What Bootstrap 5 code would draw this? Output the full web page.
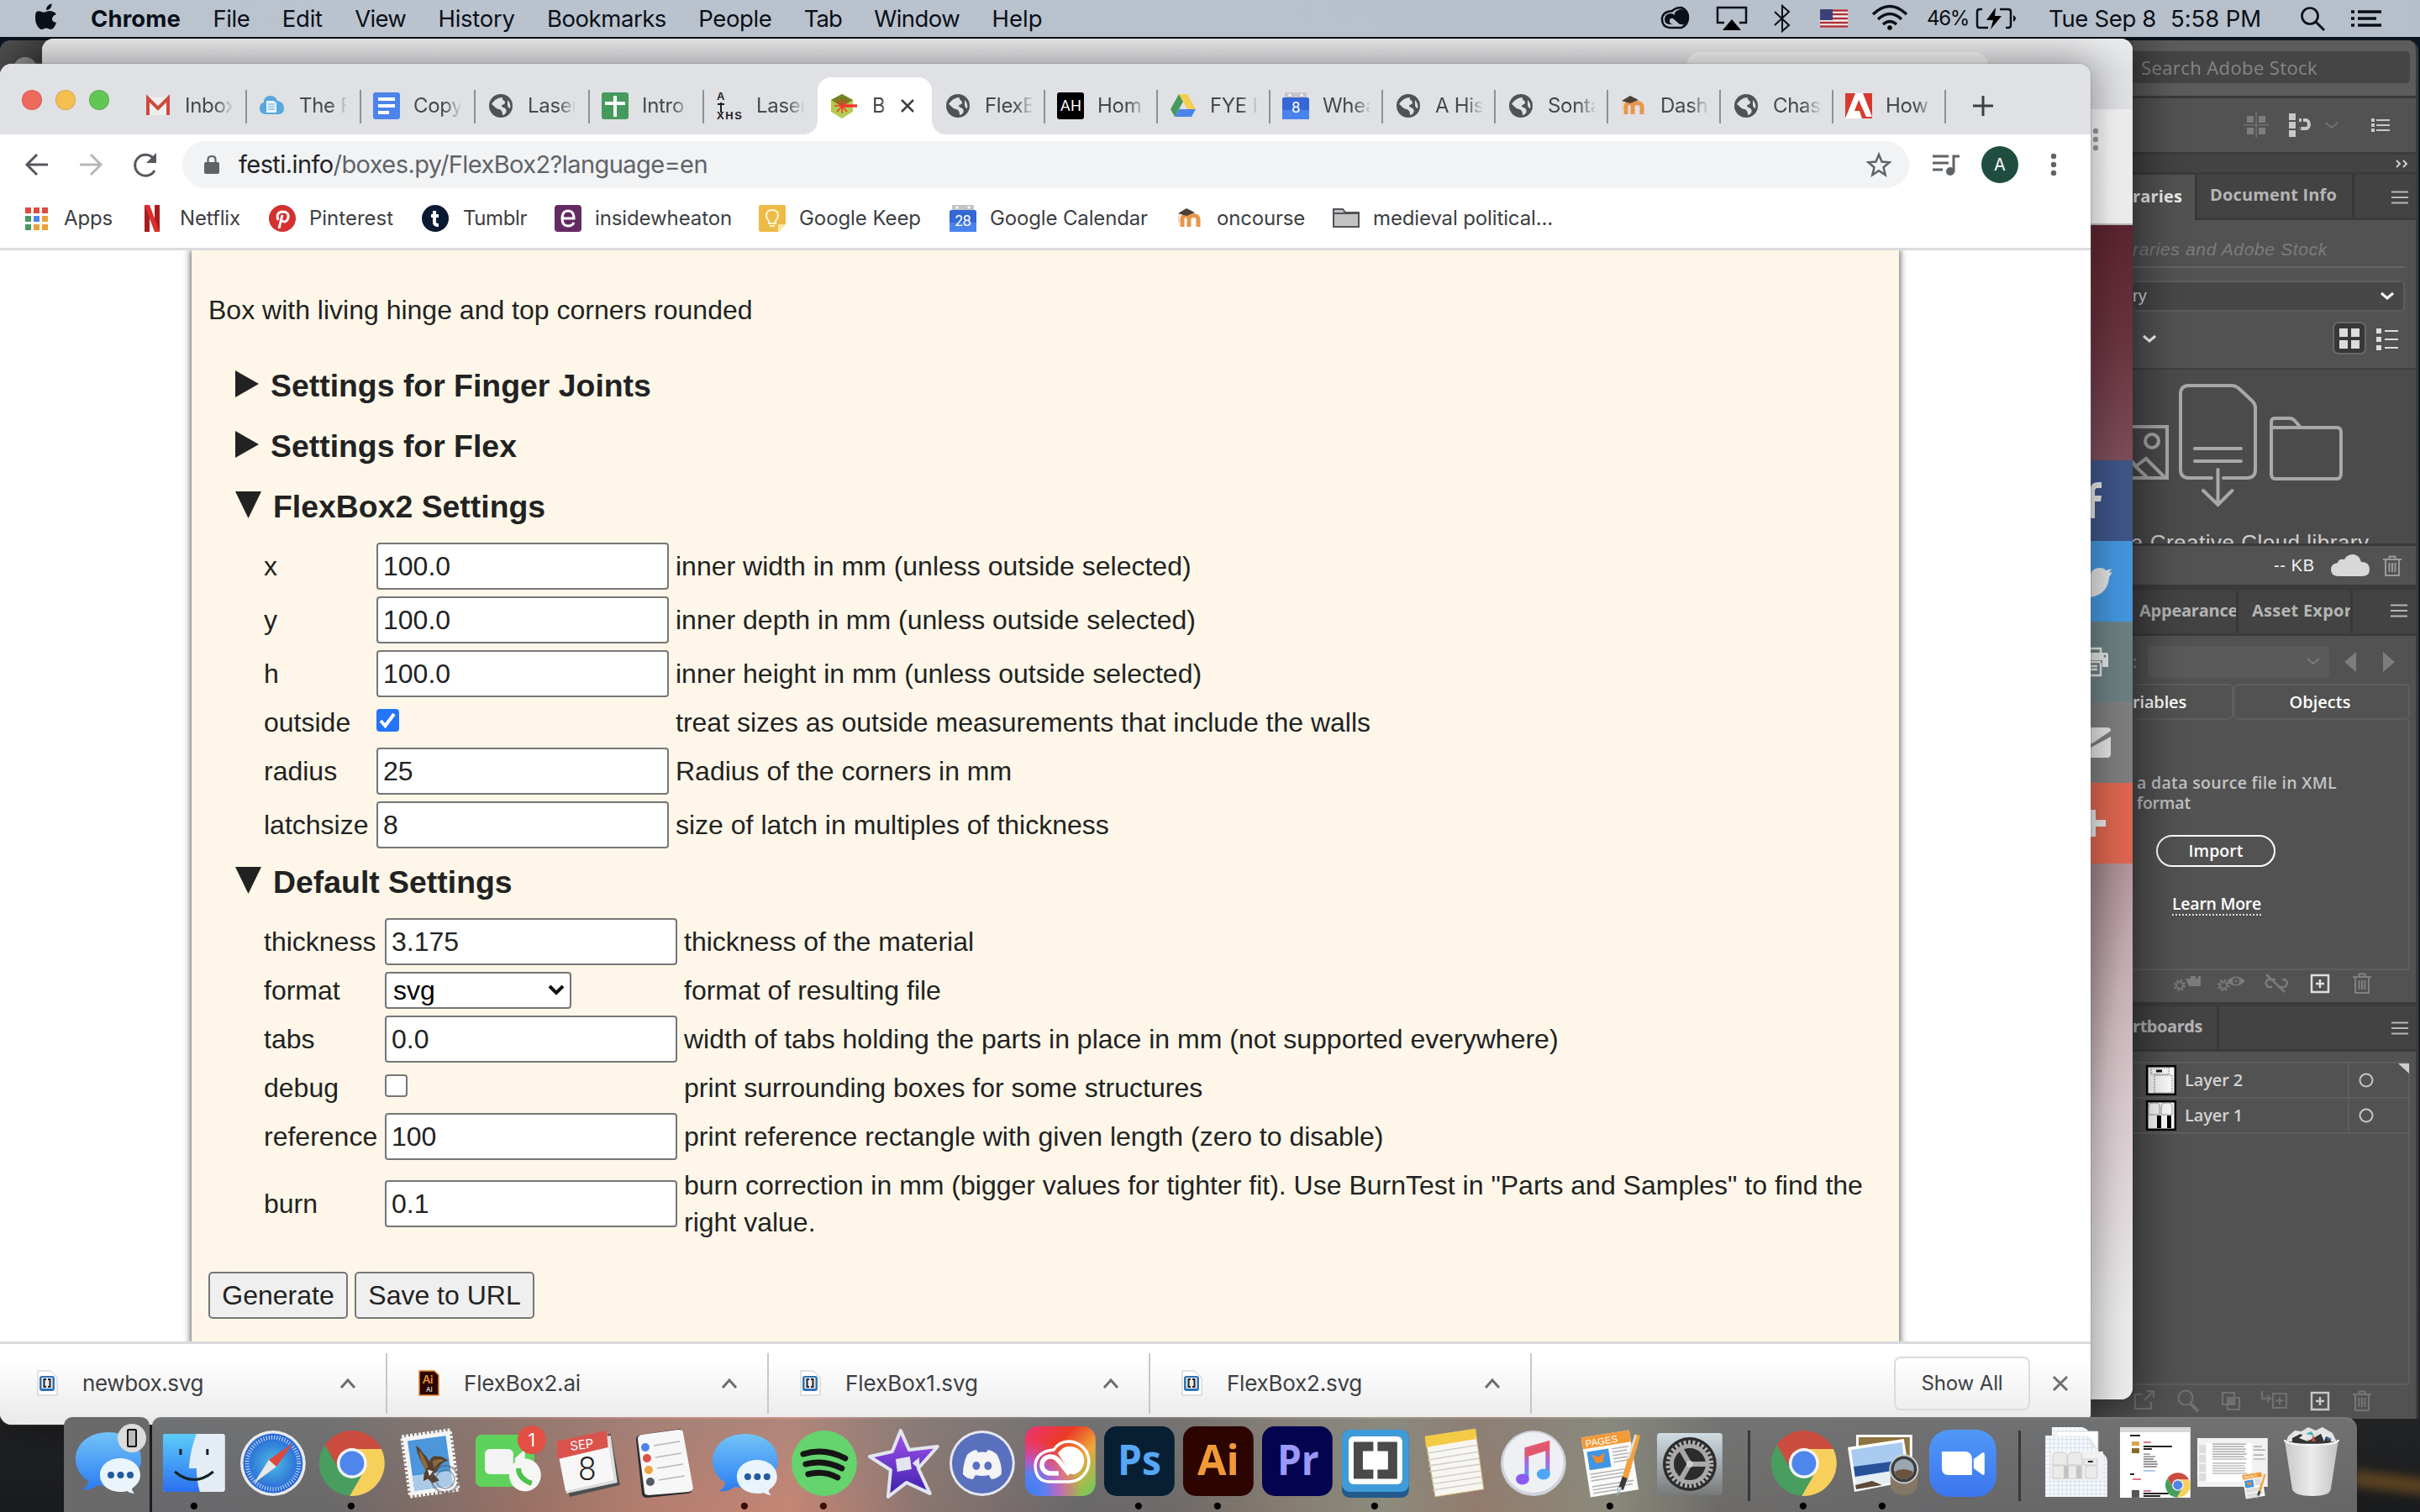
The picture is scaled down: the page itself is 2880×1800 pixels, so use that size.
<!DOCTYPE html>
<html lang="en">
<head>
<meta charset="utf-8">
<title>Boxes.py - FlexBox2</title>
<link href="https://cdn.jsdelivr.net/npm/bootstrap@5.3.0/dist/css/bootstrap.min.css" rel="stylesheet">
<style>
body{width:2880px;height:1800px;overflow:hidden;background:#1c1d1f;font-family:Inter,Roboto,sans-serif;color:#3c4043;line-height:1.2}
svg{display:block;flex:none;overflow:visible}
[data-w]{white-space:pre;flex:none}
.desktop{width:2880px;height:1800px;overflow:hidden;background:linear-gradient(#0d1622 0 60px,#232426 1680px,#191a1c)}
.streak{left:2800px;top:1755px;width:90px;height:20px;background:#5a4220;filter:blur(6px);transform:rotate(7deg)}
.menubar{height:46px;background:linear-gradient(90deg,#bbc4ce,#b7c0ca);border-bottom:2px solid #0a1018;color:#0a0f18;font-size:27.5px;z-index:9}
.menubar>*{position:relative}
.mi{margin-right:38.4px}
.win{position:absolute;overflow:hidden}
/* vector editor window behind everything */
.editor{left:0;top:48px;width:2878px;height:1641px;background:#525252;border-radius:12px 12px 0 0;border-right:3px solid #3c3c3c;font-family:"Open Sans","Noto Sans",sans-serif;font-size:20px;color:#d2d2d2}
.side{margin-left:2538px;width:338px;height:1641px}
.side>div{flex:none;overflow:hidden}
.ln{border-bottom:3px solid #3b3b3b}
.dk{background:#434343}
.ptab{border-right:3px solid #383838;font-weight:700;color:#b5b5b5;overflow:hidden;white-space:nowrap;padding-bottom:3px}
.fieldbox{background:#474747;border:2px solid #5e5e5e;border-radius:6px}
.pill{border:2.5px solid #fff;border-radius:20px;width:142px;height:38px;color:#fff;font-weight:600}
/* second browser window */
.back{left:50px;top:46px;width:2488px;height:1620px;background:#e1e2e5;border-radius:14px;box-shadow:0 0 50px 14px rgba(0,0,0,.42)}
.backtop{height:84px;background:linear-gradient(#eaebec 0,#e1e2e5 40px)}
.backtab{margin-left:1957px;margin-top:16px;width:359px;height:30px;background:#f5f5f5;border-radius:16px 16px 0 0}
.share{width:50px;margin-left:2438px}
.share>div{height:96px;position:relative}
/* main browser window */
.front{left:0;top:76px;width:2488px;height:1620px;background:#fff;border-radius:14px;box-shadow:0 0 2px #777,0 0 45px 6px rgba(0,0,0,.35)}
.strip{height:84px;background:#dfe1e5;padding-top:16px}
.lights{width:157px;padding:15px 0 0 26px;gap:16px}
.lights i{width:24px;height:24px;border-radius:50%;border:1px solid rgba(0,0,0,.12)}
.btab{width:136px;height:68px;padding-left:15px;gap:16px;position:relative;font-size:24px}
.btab.n{width:134px}
.btab::after{content:"";position:absolute;right:-1px;top:15px;width:2px;height:40px;background:#8d9095}
.btab.x::after{display:none}
.btab b{font-weight:400;width:56px;overflow:hidden;white-space:nowrap;letter-spacing:-.3px;color:#45484c;-webkit-mask-image:linear-gradient(90deg,#000 64%,transparent 104%);mask-image:linear-gradient(90deg,#000 64%,transparent 104%)}
.btab.on{background:#fff;border-radius:16px 16px 0 0}
.btab.on::before{content:"";position:absolute;left:-16px;right:-16px;bottom:0;height:16px;background:radial-gradient(circle at 0 0,transparent 15.5px,#fff 16px) left/16px 16px no-repeat,radial-gradient(circle at 100% 0,transparent 15.5px,#fff 16px) right/16px 16px no-repeat}
.bar{height:72px;padding-left:22px}
.omni{width:2055px;height:56px;border-radius:28px;background:#f1f3f4;margin-left:24px;font-size:29px;color:#5f6368}
.omni em{font-style:normal;color:#202124}
.marks{height:63px;padding-left:28px;font-size:24px}
.mk{gap:16px}
.page{height:1305px;border-top:3px solid #d9dbde;border-bottom:3px solid #d9dade;background:#fff;font-family:"Liberation Sans",Arial,sans-serif;font-size:32px;line-height:44px;color:#222}
.sheet{margin-left:228px;width:2032px;height:1303px;background:#fef7e9;box-shadow:0 0 8px 1px #555;padding:49px 20px 0}
.sheet h3{font-size:37.4px;font-weight:700;line-height:44px;margin:0;height:72px;padding-left:32px;display:flex;align-items:center}
.sheet h3 svg{margin-top:-4px}
.fgrid{display:grid;align-items:center;margin-left:66px;margin-top:3px}
.g1{grid-template-columns:134px 356px 1fr;grid-template-rows:64px 64px 64px 52px 64px 64px}
.g2{grid-template-columns:144px 356px 1fr;grid-template-rows:64px 52px 64px 52px 64px 96px}
.fgrid input[type=text]{width:348px;height:56px;border:2px solid #767676;border-radius:4px;padding:0 6px;font:32px "Liberation Sans",Arial,sans-serif;color:#222;background:#fff;display:block}
.ck{width:27px;height:27px;border-radius:4px;border:2px solid #767676;background:#fff;margin-bottom:6px}
.ck.c{background:#2374f7;border-color:#2374f7}
.sel{width:222px;height:44px;border:2px solid #767676;border-radius:4px;background:#fff;padding:0 6px 0 8px;color:#000}
.pbtn{height:56px;border:2px solid #767676;border-radius:5px;background:#efefef;font:32px "Liberation Sans",Arial,sans-serif;color:#222;padding:0}
.shelf{height:96px;background:linear-gradient(#fff 20%,#e9e9e9);font-size:26px;padding-bottom:2px}
.dl{width:454px;height:72px;border-right:2px solid #c7c8ca;margin-top:0}
.showall{width:162px;height:64px;border:2px solid #dadce0;border-radius:8px;font-size:24px}
/* dock */
.dock{position:absolute;top:1687px;height:113px;left:76px}
.dock .d1{width:102px;background:#6a6a6b;border-radius:10px 10px 0 0}
.dock .d2{margin-left:3px;width:2624px;border-radius:10px 14px 0 0;padding-left:3px;background:linear-gradient(rgba(130,135,135,.32),rgba(110,110,112,0)),linear-gradient(90deg,#67686b 0,#6a6869 8%,#9a7164 17%,#b37c6e 22%,#c58675 29%,#8a7570 35%,#696769 42%,#706b69 47%,#857b70 51%,#8d8b7c 56%,#937b6c 60%,#8b8a7a 66%,#6d6b69 71%,#686769 80%,#676667 100%);border-top:2px solid rgba(255,255,255,.12)}
.sep i{display:block;width:3px;height:84px;background:#383838;margin-top:14px}
.s1{width:35px;padding-left:21px}
.s2{width:49px;padding-left:27px}
.dock svg{width:94px;height:113px;margin-top:-1px}
.dock .d2 svg{width:93.75px}
</style>
<script src="https://cdn.jsdelivr.net/npm/bootstrap@5.3.0/dist/js/bootstrap.bundle.min.js"></script>
</head>
<body>
<svg width="0" height="0" class="position-absolute">
<defs>
<linearGradient id="msg" x1="0" y1="0" x2="0" y2="1"><stop offset="0" stop-color="#72c3f8"/><stop offset="1" stop-color="#2c7df2"/></linearGradient>
<linearGradient id="fnd" x1="0" y1="0" x2="0" y2="1"><stop offset="0" stop-color="#5ccdfa"/><stop offset="1" stop-color="#2b6ff0"/></linearGradient>
<radialGradient id="saf"><stop offset="0" stop-color="#4fbbe0"/><stop offset="1" stop-color="#2563d8"/></radialGradient>
<linearGradient id="ccg" x1="0" y1="0" x2="1" y2="1"><stop offset="0" stop-color="#ee3377"/><stop offset=".35" stop-color="#ea3a24"/><stop offset=".62" stop-color="#f0a53a"/><stop offset="1" stop-color="#5fd060"/></linearGradient>
<radialGradient id="ccb" cx="0" cy=".95" r=".8"><stop offset="0" stop-color="#3a7df0"/><stop offset=".35" stop-color="#5a80f0"/><stop offset=".6" stop-color="#b35ae0" stop-opacity=".8"/><stop offset="1" stop-color="#e040a0" stop-opacity="0"/></radialGradient>
<linearGradient id="star" x1="0" y1="0" x2="0" y2="1"><stop offset="0" stop-color="#a453f0"/><stop offset="1" stop-color="#3920a8"/></linearGradient>
<linearGradient id="note" x1="0" y1="0" x2="0" y2="1"><stop offset="0" stop-color="#ee5a6c"/><stop offset=".5" stop-color="#a868e0"/><stop offset="1" stop-color="#42a5f2"/></linearGradient>
<linearGradient id="gry" x1="0" y1="0" x2="0" y2="1"><stop offset="0" stop-color="#cfdde4"/><stop offset="1" stop-color="#77797a"/></linearGradient>
<linearGradient id="zm" x1="0" y1="0" x2="0" y2="1"><stop offset="0" stop-color="#5198f8"/><stop offset="1" stop-color="#3b76ee"/></linearGradient>
<linearGradient id="cn" x1="0" x2="1"><stop offset="0" stop-color="#c8c8c8"/><stop offset=".5" stop-color="#ececec"/><stop offset="1" stop-color="#c2c2c2"/></linearGradient>
<pattern id="grid" width="5" height="5" patternUnits="userSpaceOnUse"><path d="M0 0H5M0 0V5" stroke="#bcd2ea" stroke-width="1.1"/></pattern>
<g id="chrome"><path fill="#ca4d40" d="M-32.3-21.9A39 39 0 0 1 35.1-17L0-17L-14.7 8.5Z"/><path fill="#f7cf5b" d="M35.1-17A39 39 0 0 1-2.8 38.9L14.7 8.5L0-17Z"/><path fill="#479e5f" d="M-2.8 38.9A39 39 0 0 1-32.3-21.9L-14.7 8.5H14.7Z"/><circle r="18" fill="#f4f4f4"/><circle r="14.500" fill="#4e86ec"/></g>
<g id="bubble"><path fill="url(#msg)" d="M47 19C24 19 8 33 8 51c0 11 6 20 15 26 0 5-3 8-8 10 8 1 15-1 19-5 4 1 8 1 13 1 23 0 39-14 39-32S70 19 47 19z"/><path fill="#e9f4fc" d="M61 50c-14 0-24 9-24 20s10 20 24 20c3 0 6 0 8-1 3 2 6 3 9 3-2-2-3-4-3-6 6-4 10-9 10-16 0-11-10-20-24-20z"/><g fill="#2659a0"><circle cx="50" cy="70" r="4"/><circle cx="61.500" cy="70" r="4"/><circle cx="73" cy="70" r="4"/></g></g>
<g id="globe"><circle cx="16" cy="16" r="14" fill="#4f5256"/><path fill="#dfe1e5" d="M5 14c3-5 8-8 13-8-1 4 3 3 3 6 0 3-4 2-4 4s4 2 5 4c2 3-1 7-4 7 0-4-1-6-4-7-3 0-5-3-9-6zM24 9c3 3 4 7 3 10-3-1-3-4-3-6z"/></g>
<g id="moodle"><path d="M7 26V17c0-6 8-6 8 0v9M15 17c0-6 11-6 11 0v9" fill="none" stroke="#e8964a" stroke-width="5"/><path d="M2 10L12 4l10 5-10 4z" fill="#4a4038"/><path d="M3 11v10" stroke="#eec9a5" stroke-width="1.500"/></g>
<g id="cal"><path fill="#c5c5c5" d="M3 0H29V8H3z"/><circle cx="9" cy="3" r="1.600" fill="#fff"/><circle cx="23" cy="3" r="1.600" fill="#fff"/><rect y="6" width="32" height="26" rx="2" fill="#3567d6"/><path fill="#4a83ee" d="M0 21H32V32H0z"/></g>
<g id="burger"><path d="M0 1.500H20M0 8H20M0 14.500H20" stroke="#b8b8b8" stroke-width="2"/></g>
<g id="bin" fill="none" stroke-width="2"><path d="M0 5H22M3 5V24H19V5M7.500 5V1.500H14.500V5M7.500 9V20M11 9V20M14.500 9V20"/></g>
<g id="plusbox" fill="none" stroke-width="2.500"><path d="M1 1H21V21H1zM11 6V16M6 11H16"/></g>
<g id="file"><path fill="#fff" stroke="#c6c6c6" d="M1 1H16L24 9V30H1z"/><rect x="3" y="7" width="18" height="18" rx="3" fill="#2f73b8"/><rect x="5.500" y="9" width="13" height="13" fill="#eee"/><path d="M11 11H8.500V20H11M13 11H15.500V20H13" fill="none" stroke="#222" stroke-width="2"/></g>
<g id="up"><path d="M1 11L9 2l8 9" fill="none" stroke="#6b6e72" stroke-width="3"/></g>
<g id="pages"><g transform="rotate(-9 40 50)"><path fill="#fbfbfb" d="M8 20H66V92H8z"/><path fill="#f29a38" d="M8 20H66V34H8z"/><text x="12" y="32" font-size="11.500" fill="#fff" font-family="Liberation Sans">PAGES</text><path fill="#3f96e4" d="M12 38H38V60H12z"/><path fill="#f08a2c" d="M17 42l8 4 8-4-4 11h-8z"/><path d="M42 39H62M42 43H60M42 47H62M42 51H59M42 55H62M12 65H62M12 69H60M12 73H56M12 80H62M12 84H60M12 88H48" stroke="#b0b0b0" stroke-width="1.500"/></g><path d="M71 22L56 74" stroke="#f2a23c" stroke-width="7"/><path d="M69 22L60 50" stroke="#dfe3ec" stroke-width="2.500"/><path d="M56 73L51 87" stroke="#3b3b3b" stroke-width="6.500"/><path d="M52 85l-5 10 1-11z" fill="#dde6ee" stroke="#8aa" stroke-width="1"/></g>
</defs></svg>

<div class="desktop position-relative">
<div class="streak position-absolute"></div>

<!-- editor window -->
<div class="win editor">
 <svg class="position-absolute" width="50" height="30" viewBox="0 0 50 30"><circle cx="30" cy="34" r="14" fill="#aaa"/></svg>
 <div class="side d-flex flex-column">
  <div class="ln d-flex align-items-center" style="height:69px;background:#5c5c5c"><div class="d-flex align-items-center" style="width:330px;height:38px;background:#454545;border-radius:0 5px 5px 0;margin-top:-3px"><span style="color:#858585;font-size:22px;margin-left:10px;padding-top:2px" data-w="210">Search Adobe Stock</span></div></div>
  <div class="ln d-flex" style="height:67px"><svg width="338" height="64"><g fill="#7d7d7d"><path d="M136 21h8v8h-8zM150 21h8v8h-8zM136 35h8v8h-8zM150 35h8v8h-8z"/><path d="M132 31h30v1.600h-30zM146.300 16h1.600v31h-1.600z" opacity=".7"/></g><path fill="#c8c8c8" d="M186 18h8v8h-8zM186 28h8v8h-8zM186 38h8v8h-8z"/><path d="M198 26h8a4 5 0 0 1 0 10h-8" fill="none" stroke="#c8c8c8" stroke-width="4" stroke-dasharray="3 2 22.500 2 4"/><path d="M230 29l7 6 7-6" fill="none" stroke="#737373" stroke-width="2"/><path fill="#c8c8c8" d="M284 24h4v4h-4zM284 30h4v4h-4zM284 36h4v4h-4zM290 25h16v2h-16zM290 31h16v2h-16zM290 37h16v2h-16z"/></svg></div>
  <div class="ln dk" style="height:24px"><svg width="338" height="21"><path d="M314 7l4 4-4 4M322 7l4 4-4 4" fill="none" stroke="#cfcfcf" stroke-width="2"/></svg></div>
  <div class="d-flex dk" style="height:54px"><div class="ptab d-flex align-items-center" style="width:77px;background:#525252;color:#eee"><span data-w="59">raries</span></div><div class="ptab ln d-flex align-items-center" style="width:187px;padding-left:15px"><span data-w="151">Document Info</span></div><div class="ln flex-fill pt-0"><svg width="60" height="50" viewBox="-44 -19 60 50"><use href="#burger"/></svg></div></div>
  <div style="height:176px;padding:23px 14px 0 0"><div style="font:italic 21px 'Liberation Sans';color:#7d7d7d;height:34px;border-bottom:2px solid #646464;width:324px"><span class="d-inline-block" data-w="232">raries and Adobe Stock</span></div>
   <div class="fieldbox d-flex justify-content-between align-items-center border-start-0" style="height:37px;margin-top:15px;font:20px 'Liberation Sans';color:#ddd;padding-right:11px"><span>ry</span><svg width="16" height="12"><path d="M1 2l7 6 7-6" fill="none" stroke="#fff" stroke-width="3"/></svg></div>
   <svg width="324" height="60" viewBox="0 -3 324 60"><path d="M13 26l7 6 7-6" fill="none" stroke="#fff" stroke-width="3"/><rect x="239" y="10" width="38" height="37" rx="6" fill="#383838" stroke="#686868" stroke-width="2"/><path fill="#dcdcdc" d="M246 17h10v10h-10zM260 17h10v10h-10zM246 31h10v10h-10zM260 31h10v10h-10zM290 17h6v6h-6zM290 27h6v6h-6zM290 37h6v6h-6zM300 19h16v2h-16zM300 29h16v2h-16zM300 39h16v2h-16z"/></svg></div>
  <div class="ln" style="height:212px;background:#4b4b4b;border-top:2px solid #404040"><svg width="338" height="210" viewBox="0 439 338 210"><g fill="none" stroke="#a8a8a8" stroke-width="4" stroke-linecap="round"><path d="M0 507H41V568H0M0 549l4 5 12-9 22 22M2 553l14 13"/><ellipse cx="23" cy="524" rx="8" ry="8"/><path d="M94 568H67Q57 568 57 558V468Q57 458 67 458H118Q122 458 126 461L142 476Q146 480 146 484V558Q146 568 136 568H108M74 533H129M74 548H129M101.500 558V599M84 583l17.500 17 17-17"/><path d="M165 509V502Q165 497 169 497H187Q191 497 194 501L200 508H243Q248 508 248 514V562Q248 569 243 569H170Q165 569 165 563V508H200"/></g><text x="-2" y="654" font-family="Liberation Sans" font-size="26" fill="#d0d0d0" textLength="283">a Creative Cloud library</text></svg></div>
  <div class="ln d-flex" style="height:50px;border-bottom-width:4px"><svg width="338" height="46" viewBox="0 650 338 46"><text x="168" y="680" font-family="Liberation Sans" font-size="20" fill="#f2f2f2" textLength="48">-- KB</text><path fill="#d8d8d8" d="M244 686q-8-1-8-8t8-8q1-5 8-4 4-7 11-6t9 9q10 0 10 9 0 8-9 8z"/><g transform="translate(298 661)" stroke="#999"><use href="#bin"/></g></svg></div>
  <div class="d-flex dk ln" style="height:57px;border-top:3px solid #3b3b3b"><div class="ptab d-flex align-items-center" style="width:126px;padding-left:8px"><span data-w="117">Appearance</span></div><div class="ptab d-flex align-items-center" style="width:136px;padding-left:16px"><span data-w="128">Asset Export</span></div><svg width="60" height="50" viewBox="-45 -16 60 50"><use href="#burger"/></svg></div>
  <div class="ln" style="height:441px;border-bottom-width:5px"><div class="d-flex align-items-center" style="height:57px;padding-top:4px"><span style="width:18px;color:#999">:</span><div class="d-flex align-items-center justify-content-end" style="width:216px;height:38px;background:#5a5a5a;border-radius:5px;padding-right:11px"><svg width="16" height="12"><path d="M1 2l7 6 7-6" fill="none" stroke="#7a7a7a" stroke-width="2"/></svg></div><svg width="80" height="24" viewBox="0 0 80 24"><path fill="#7d7d7d" d="M18 12l14-12V24zM78 12L64 0V24z"/></svg></div>
   <div class="d-flex" style="width:330px;height:43px;color:#fff;font-weight:600"><div class="d-flex align-items-center fieldbox" style="width:120px;background:none;border-left:0"><span data-w="64">riables</span></div><div class="d-flex align-items-center justify-content-center fieldbox flex-fill" style="background:none;padding-right:4px"><span data-w="73">Objects</span></div></div>
   <div class="d-flex flex-column" style="width:330px;height:298px;border:2px solid #5e5e5e;border-left:0;border-top:0;padding-top:63px;line-height:24px;font-weight:600;color:#c4c4c4;font-size:19.500px"><span style="margin-left:5px;width:238px" data-w="238">a data source file in XML</span><span style="margin-left:5px;width:64px" data-w="64">format</span><div class="pill d-flex align-items-center justify-content-center" style="margin:26px 0 0 28px;min-height:38px"><span data-w="65">Import</span></div><span style="margin:32px 0 0 47px;color:#fff;border-bottom:2px dotted #ddd;width:106px" data-w="106">Learn More</span></div>
   <svg width="338" height="34" viewBox="0 -1 338 34"><g fill="#7b7b7b"><path d="M63 9h6V6h6v3h3V6h3v12H67z"/><circle cx="56" cy="17" r="5.500" fill="none" stroke="#7b7b7b" stroke-width="3" stroke-dasharray="2.300 2"/><circle cx="56" cy="17" r="3.800" fill="none" stroke="#7b7b7b" stroke-width="1.500"/><circle cx="108" cy="17" r="5.500" fill="none" stroke="#7b7b7b" stroke-width="3" stroke-dasharray="2.300 2"/><circle cx="108" cy="17" r="3.800" fill="none" stroke="#7b7b7b" stroke-width="1.500"/><path d="M112 12q11-11 22 0-11 11-22 0z"/></g><circle cx="123" cy="12" r="4" fill="#525252"/><circle cx="123" cy="12" r="1.600" fill="#7b7b7b"/><path d="M170 10h-9q-5 4 0 9h5M173 19h8q6-5 0-9h-3M159 4l22 21" fill="none" stroke="#7b7b7b" stroke-width="2.500"/><g transform="translate(212 4)" stroke="#e0e0e0"><use href="#plusbox"/></g><g transform="translate(262 2)" stroke="#808080"><use href="#bin"/></g></svg></div>
  <div class="d-flex dk ln" style="height:54px"><div class="ptab d-flex align-items-center" style="width:103px"><span data-w="83">rtboards</span></div><svg width="230" height="52" viewBox="-205 -18 230 52"><use href="#burger"/></svg></div>
  <div class="flex-fill"><div style="margin-top:12px;width:330px;height:385px;border:2px solid #5e5e5e;border-left:0;border-radius:0 5px 5px 0;font-weight:600">
   <div class="d-flex align-items-center" style="height:42px;border-bottom:2px solid #5e5e5e"><svg width="36" height="36" viewBox="0 0 36 36" style="margin-left:16px"><path fill="#fff" stroke="#000" stroke-width="2.500" d="M1.200 1.200H34.800V34.800H1.200z"/><path fill="none" stroke="#888" stroke-dasharray="2 1" d="M6 3H27V11H6zM10 12H31V33H10z"/><path stroke="#111" stroke-width="3" d="M12 7H19"/></svg><span style="margin-left:10px" data-w="69">Layer 2</span><div style="border-left:2px solid #5e5e5e;height:40px;margin-left:125px"></div><svg width="74" height="40"><circle cx="20" cy="20" r="7.500" fill="none" stroke="#c6c6c6" stroke-width="2"/><path fill="#ccc" d="M58 0H71V12z"/></svg></div>
   <div class="d-flex align-items-center" style="height:42px;border-bottom:2px solid #5e5e5e"><svg width="36" height="36" viewBox="0 0 36 36" style="margin-left:16px"><path fill="#fff" stroke="#000" stroke-width="2.500" d="M1.200 1.200H34.800V34.800H1.200z"/><path fill="none" stroke="#999" d="M3 17V8Q3 3 8 3H12Q16 3 16 8V17zM18 17V8Q18 3 23 3H27Q31 3 31 8V17z"/><path d="M13 18h5v15h-5zM25 18h5v15h-5z"/></svg><span style="margin-left:10px" data-w="69">Layer 1</span><div style="border-left:2px solid #5e5e5e;height:40px;margin-left:125px"></div><svg width="74" height="40"><circle cx="20" cy="20" r="7.500" fill="none" stroke="#c6c6c6" stroke-width="2"/></svg></div></div>
   <svg width="338" height="38"><g fill="none" stroke="#707070" stroke-width="2.200"><path d="M12 11H3V28H22V20M14 18L25 7M17 7H25V15"/><circle cx="63" cy="15" r="8.500"/><path d="M69 22l9 9" stroke-width="4"/><path d="M107 9h14v14h-14zM121 15h6v14h-14v-6"/><path fill="#707070" d="M113 15h8v8h-8z"/><path d="M154 7v9h9M160 12l4 4-4 4M167 10h16v17h-16zM175 14v9M170.500 18.500h9"/></g><g transform="translate(212 8)" stroke="#c8c8c8"><use href="#plusbox"/></g><g transform="translate(262 6)" stroke="#757575"><use href="#bin"/></g></svg></div>
 </div>
</div>

<!-- back browser window -->
<div class="win back">
 <div class="backtop d-flex"><div class="backtab"></div></div>
 <div style="height:138px;background:linear-gradient(90deg,#ececec,#f8f8f8 2460px,#ececec);border-bottom:2px solid #b9b9bb"><svg width="2488" height="60"><g fill="#9c9c9c"><circle cx="2444" cy="26" r="3.200"/><circle cx="2444" cy="36" r="3.200"/><circle cx="2444" cy="46" r="3.200"/></g></svg></div>
 <div class="share d-flex flex-column"><div style="height:280px;background:linear-gradient(#5c2430,#6a3440 50%,#7d4e59)"></div>
  <div style="background:#3e5588"><svg width="50" height="96"><path fill="#e8e8e8" d="M0 69V33q1-7 9-7h4v7H8q-3 0-3 4v5h8l-1 7H5v20z"/></svg></div>
  <div style="background:#4496de"><svg width="50" height="96"><path fill="#e4e4e4" d="M0 40q2-8 11-8 5 0 7 3l7-2-3 5 4-1-4 6q-1 20-22 24z"/></svg></div>
  <div style="background:#6c8083"><svg width="50" height="96"><path fill="none" stroke="#e4e4e4" stroke-width="2.500" d="M0 32H12V38M0 64H12V49M0 48H12M0 53H8M0 57H8"/><path fill="#e4e4e4" d="M0 37H18q3 0 3 3V54H14V46H0z"/><circle cx="17" cy="41" r="1.500" fill="#6c8083"/></svg></div>
  <div style="background:#7e7e7e"><svg width="50" height="96"><path fill="#e4e4e4" d="M0 30H20q4 0 4 4L2 49H0zM0 54L24 41V61q0 5-4 5H0z"/></svg></div>
  <div style="background:#dd6650"><svg width="50" height="96"><path fill="#e8e8e8" d="M0 32H6V44H18V52H6V64H0z"/></svg></div>
  <div style="height:640px;background:linear-gradient(100deg,rgba(90,70,75,.3),transparent 60px),linear-gradient(#b99ba0,#d9cace 45%,#ececec 85%)"></div></div>
</div>

<!-- front browser window -->
<div class="win front">
 <div class="strip d-flex">
  <div class="lights d-flex"><i style="background:#ee6a5f"></i><i style="background:#f5bf4f"></i><i style="background:#62c655"></i></div>
  <div class="btab d-flex align-items-center"><svg width="32" height="32"><path fill="#eee" d="M3 6H29V27H3z"/><path d="M4 27V7L16 19 28 7V27" fill="none" stroke="#cf4a3c" stroke-width="4"/></svg><b>Inbox</b></div>
  <div class="btab d-flex align-items-center"><svg width="32" height="32"><path fill="#57a9dc" d="M7 26q-6-1-6-7t5-7q0-8 8-8 6 0 8 6 8 1 8 9 0 7-6 7z"/><path fill="#e8f4fb" d="M9 10h9l3 3v11H9z"/><path d="M11 14h8M11 17h8M11 20h8" stroke="#57a9dc"/></svg><b>The F</b></div>
  <div class="btab d-flex align-items-center"><svg width="32" height="32"><rect width="32" height="32" rx="3" fill="#4d83ea"/><path fill="#fff" d="M6 6h20v4H6zM6 14h20v4H6zM6 22h13v4H6z"/></svg><b>Copy</b></div>
  <div class="btab d-flex align-items-center"><svg width="32" height="32"><use href="#globe"/></svg><b>Laser</b></div>
  <div class="btab d-flex align-items-center"><svg width="32" height="32"><rect width="32" height="32" rx="3" fill="#459a5c"/><path fill="#fff" d="M14 4h4v25h-4zM4 11h24v4H4z"/></svg><b>Intro</b></div>
  <div class="btab x d-flex align-items-center"><svg width="32" height="36" font-family="Liberation Sans" font-weight="700" fill="#222"><text x="1" y="11" font-size="13">A</text><path d="M6 14V26M2 16h8" stroke="#222" stroke-width="2"/><text x="1" y="34" font-size="13" textLength="30">XHS</text></svg><b>Laser</b></div>
  <div class="btab on x d-flex align-items-center"><svg width="34" height="32"><path fill="#b4cb52" d="M14 2l13 7v14l-13 8-13-8V9z"/><path fill="#748226" d="M14 2l13 7-13 8L1 9z"/><path d="M14 16h18" stroke="#f0392b" stroke-width="3.500"/><path d="M8 10l12 13M20 10L8 23M14 8v17M5 16h10" stroke="#f0392b" stroke-width="1.600"/></svg><b style="width:18px">B</b><svg width="16" height="16" class="ms-n2"><path d="M1 1l14 14M15 1L1 15" stroke="#3c4043" stroke-width="2.500"/></svg></div>
  <div class="btab n d-flex align-items-center"><svg width="32" height="32"><use href="#globe"/></svg><b>FlexB</b></div>
  <div class="btab n d-flex align-items-center"><svg width="32" height="32"><rect width="32" height="32" rx="3"/><text x="4" y="22" font-size="17" textLength="25" fill="#fff" font-family="Lato">AH</text></svg><b>Hom</b></div>
  <div class="btab n d-flex align-items-center"><svg width="32" height="32"><path fill="#459a5c" d="M11 2l5 9L6 29 1 20z"/><path fill="#f7cd50" d="M11 2h10l10 18H21z"/><path fill="#4d83ea" d="M11 20H31l-5 9H6z"/></svg><b>FYE I</b></div>
  <div class="btab n d-flex align-items-center"><svg width="32" height="32"><use href="#cal"/><text x="11" y="24" font-size="17" fill="#fff">8</text></svg><b>Whea</b></div>
  <div class="btab n d-flex align-items-center"><svg width="32" height="32"><use href="#globe"/></svg><b>A His</b></div>
  <div class="btab n d-flex align-items-center"><svg width="32" height="32"><use href="#globe"/></svg><b>Sonta</b></div>
  <div class="btab n d-flex align-items-center"><svg width="32" height="32"><use href="#moodle"/></svg><b>Dash</b></div>
  <div class="btab n d-flex align-items-center"><svg width="32" height="32"><use href="#globe"/></svg><b>Chas</b></div>
  <div class="btab n d-flex align-items-center"><svg width="32" height="32"><path fill="#d8392f" d="M0 1H32V31H0z"/><path fill="#fff" d="M12 1h9L32 29h-7L16 9l-5 13h6l3 9H0z"/></svg><b>How</b></div>
  <svg width="90" height="68"><path d="M45 22V46M33 34H57" stroke="#3c4043" stroke-width="3"/></svg>
 </div>
 <div class="bar d-flex align-items-center">
  <svg width="171" height="40" viewBox="22 176 171 40"><g fill="none" stroke-width="3"><path stroke="#55595e" d="M57 196H33M44 184L32 196l12 12"/><path stroke="#b5b8bb" d="M95 196H119M108 184l12 12-12 12"/><path stroke="#55595e" d="M184 203a12.500 12.500 0 1 1-1-14"/></g><path fill="#55595e" d="M186 182v12h-12z"/></svg>
  <div class="omni d-flex align-items-center"><svg width="18" height="24" style="margin:0 23px 0 26px"><rect y="9" width="18" height="14" rx="2" fill="#5f6368"/><path d="M4.500 10V6q0-4 4.500-4t4.500 4v4" fill="none" stroke="#5f6368" stroke-width="2.200"/></svg><span data-w="558"><em>festi.info</em>/boxes.py/FlexBox2?language=en</span><svg class="ms-auto" width="30" height="30" style="margin-right:21px"><path d="M15 3l3.500 8.500 9 .7-7 6 2.200 9L15 22.300l-7.700 4.900 2.200-9-7-6 9-.7z" fill="none" stroke="#5f6368" stroke-width="2.500"/></svg></div>
  <svg width="210" height="60" viewBox="2272 166 210 60"><path d="M2300 186h19M2300 194h19M2300 202h12" stroke="#5f6368" stroke-width="3"/><path d="M2325 205V186h7" fill="none" stroke="#5f6368" stroke-width="3"/><circle cx="2321" cy="204" r="5" fill="#5f6368"/><circle cx="2380" cy="196" r="22" fill="#1f4e40"/><text x="2380" y="203" font-size="20" fill="#fff" text-anchor="middle">A</text><g fill="#5f6368"><circle cx="2444" cy="186" r="3.200"/><circle cx="2444" cy="196" r="3.200"/><circle cx="2444" cy="206" r="3.200"/></g></svg>
 </div>
 <div class="marks d-flex align-items-start pt-2">
  <div class="mk d-flex align-items-center mt-1" style="margin-right:38px"><svg width="32" height="32"><path fill="#dd4b40" d="M2 3h7v7H2zM12 3h7v7h-7zM22 3h7v7h-7z"/><path fill="#459a5c" d="M2 13h7v7H2zM2 23h7v7H2z"/><path fill="#4d83ea" d="M12 13h7v7h-7z"/><path fill="#e9a23b" d="M22 13h7v7h-7zM12 23h7v7h-7zM22 23h7v7h-7z"/></svg><span data-w="58">Apps</span></div>
  <div class="mk d-flex align-items-center mt-1" style="margin-right:34px;gap:26px"><svg width="16" height="32"><path fill="#a71d20" d="M0 0h6v32H0zM12 0h6v32h-6z"/><path fill="#da2e2e" d="M0 0h6l12 32h-6z"/></svg><span data-w="72">Netflix</span></div>
  <div class="mk d-flex align-items-center mt-1" style="margin-right:34px"><svg width="32" height="32"><circle cx="16" cy="16" r="16" fill="#d3312f"/><path d="M11 18q-3-9 5-10 8 0 7 7-2 7-7 4M16 12l-4 16" fill="none" stroke="#fff" stroke-width="3"/></svg><span data-w="100">Pinterest</span></div>
  <div class="mk d-flex align-items-center mt-1" style="margin-right:33px;gap:17px"><svg width="32" height="32"><circle cx="16" cy="16" r="16" fill="#0a1a33"/><path d="M15 7v14q0 3 5 3M11 13h9" fill="none" stroke="#fff" stroke-width="4"/></svg><span data-w="76">Tumblr</span></div>
  <div class="mk d-flex align-items-center mt-1" style="margin-right:32px"><svg width="32" height="32"><rect width="32" height="32" rx="4" fill="#642a63"/><path d="M9 16h14q0-9-7-9t-7 9 7 9q5 0 7-4" fill="none" stroke="#fff" stroke-width="3"/></svg><span data-w="163">insidewheaton</span></div>
  <div class="mk d-flex align-items-center mt-1" style="margin-right:34px"><svg width="32" height="32"><path fill="#edbb47" d="M2 0h28q2 0 2 2v21l-9 9H2q-2 0-2-2V2q0-2 2-2z"/><path fill="#fbe6a3" d="M32 23l-9 9v-9z"/><path d="M12 19q-3-3-3-6 0-7 7-7t7 7q0 3-3 6v3h-8zM13 25h6" fill="none" stroke="#fff3d0" stroke-width="2.200"/></svg><span data-w="145">Google Keep</span></div>
  <div class="mk d-flex align-items-center mt-1" style="margin-right:34px"><svg width="32" height="32"><use href="#cal"/><text x="6" y="25" font-size="17" fill="#fff" textLength="20">28</text></svg><span data-w="188">Google Calendar</span></div>
  <div class="mk d-flex align-items-center mt-1" style="margin-right:33px"><svg width="32" height="32"><use href="#moodle"/></svg><span data-w="105">oncourse</span></div>
  <div class="mk d-flex align-items-center mt-1"><svg width="32" height="32"><path fill="#c2c2c2" stroke="#4f5256" stroke-width="2" d="M1 5h11l3 4h16v17H1z"/><path d="M1 10h30" stroke="#4f5256" stroke-width="2"/></svg><span data-w="214">medieval political...</span></div>
 </div>
 <div class="page overflow-hidden"><div class="sheet">
  <div style="height:76px">Box with living hinge and top corners rounded</div>
  <h3><svg width="42" height="32"><path d="M0 0L28 16 0 32z" fill="#222"/></svg>Settings for Finger Joints</h3>
  <h3><svg width="42" height="32"><path d="M0 0L28 16 0 32z" fill="#222"/></svg>Settings for Flex</h3>
  <h3><svg width="45" height="32"><path d="M0 0H31L15.500 32z" fill="#222"/></svg>FlexBox2 Settings</h3>
  <div class="fgrid g1">
   <span>x</span><input type="text" value="100.0"><span>inner width in mm (unless outside selected)</span>
   <span>y</span><input type="text" value="100.0"><span>inner depth in mm (unless outside selected)</span>
   <span>h</span><input type="text" value="100.0"><span>inner height in mm (unless outside selected)</span>
   <span>outside</span><div class="ck c"><svg width="23" height="23"><path d="M3 12l5.500 6L19 4" fill="none" stroke="#fff" stroke-width="4"/></svg></div><span>treat sizes as outside measurements that include the walls</span>
   <span>radius</span><input type="text" value="25"><span>Radius of the corners in mm</span>
   <span>latchsize</span><input type="text" value="8"><span>size of latch in multiples of thickness</span>
  </div>
  <h3><svg width="45" height="32"><path d="M0 0H31L15.500 32z" fill="#222"/></svg>Default Settings</h3>
  <div class="fgrid g2">
   <span>thickness</span><input type="text" value="3.175"><span>thickness of the material</span>
   <span>format</span><div class="sel d-flex align-items-center justify-content-between"><span>svg</span><svg width="20" height="14"><path d="M2 2l8 8 8-8" fill="none" stroke="#111" stroke-width="4"/></svg></div><span>format of resulting file</span>
   <span>tabs</span><input type="text" value="0.0"><span>width of tabs holding the parts in place in mm (not supported everywhere)</span>
   <span>debug</span><div class="ck"></div><span>print surrounding boxes for some structures</span>
   <span>reference</span><input type="text" value="100"><span>print reference rectangle with given length (zero to disable)</span>
   <span>burn</span><input type="text" value="0.1"><span>burn correction in mm (bigger values for tighter fit). Use BurnTest in "Parts and Samples" to find the right value.</span>
  </div>
  <div class="d-flex gap-2" style="margin-top:33px"><button class="pbtn" style="width:166px">Generate</button><button class="pbtn" style="width:214px">Save to URL</button></div>
 </div></div>
 <div class="shelf d-flex align-items-center">
  <div class="dl d-flex align-items-center" style="width:461px;padding-left:44px"><svg width="54" height="32"><use href="#file"/></svg><span data-w="144">newbox.svg</span><svg class="ms-auto" width="18" height="12" style="margin-right:36px"><use href="#up"/></svg></div>
  <div class="dl d-flex align-items-center" style="padding-left:37px"><svg width="54" height="32"><path fill="#2a0500" stroke="#e8842c" stroke-width="1.500" d="M1 1H19L24 6V30H1z"/><text x="5" y="16" font-size="13" font-weight="700" fill="#f29a33" font-family="Lato">Ai</text><text x="9" y="26" font-size="8" fill="#fff">AI</text></svg><span data-w="139">FlexBox2.ai</span><svg class="ms-auto" width="18" height="12" style="margin-right:36px"><use href="#up"/></svg></div>
  <div class="dl d-flex align-items-center" style="padding-left:37px"><svg width="54" height="32"><use href="#file"/></svg><span data-w="158">FlexBox1.svg</span><svg class="ms-auto" width="18" height="12" style="margin-right:36px"><use href="#up"/></svg></div>
  <div class="dl d-flex align-items-center" style="padding-left:37px"><svg width="54" height="32"><use href="#file"/></svg><span data-w="161">FlexBox2.svg</span><svg class="ms-auto" width="18" height="12" style="margin-right:36px"><use href="#up"/></svg></div>
  <div class="showall ms-auto d-flex align-items-center justify-content-center"><span data-w="97">Show All</span></div><svg width="18" height="18" style="margin:0 27px 0 27px"><path d="M1 1l16 16M17 1L1 17" stroke="#6b6e72" stroke-width="3"/></svg>
 </div>
</div>

<!-- menu bar -->
<div class="menubar position-absolute top-0 start-0 w-100 d-flex align-items-center">
 <svg width="108" height="44"><path fill="#0a0f18" d="M61 24c0-4 2-6 5-7-2-3-5-4-8-4-3 0-5 1.700-6.500 1.700S47 13.200 45 13.200C41 13 41 17 41 22c0 6 4 13 7.500 13 2 0 3-1.400 5.500-1.400S57.500 35 59.500 35c3 0 5-4 6.500-8-3-.800-5-2-5-4zM54 12c0-4 3-7 6.500-7.500C61 8.500 58 12 54 12z" transform="translate(1 0)"/></svg>
 <b class="mi" data-w="107">Chrome</b><span class="mi" data-w="44">File</span><span class="mi" data-w="48">Edit</span><span class="mi" data-w="61">View</span><span class="mi" data-w="91">History</span><span class="mi" data-w="142">Bookmarks</span><span class="mi" data-w="87">People</span><span class="mi" data-w="45">Tab</span><span class="mi" data-w="102">Window</span><span data-w="60">Help</span>
 <svg class="ms-auto" width="318" height="44" viewBox="1975 0 318 44"><path fill="none" stroke="#0a0f18" stroke-width="2.500" d="M1987 33H2001A13 13 0 0 0 2001 9Q1994 9 1990 13 1978 14 1978 23T1987 33z"/><path fill="#0a0f18" d="M1981 23q0-6 7-7 4 0 7 4l7 9h-3l-8-7q-4-1-4 3t5 4h-4q-7 0-7-6zM1993 15q4-4 8-4a10 10 0 0 1 2 19l-10-12z"/><path d="M2052 27h-8V9H2078V27h-8" fill="none" stroke="#0a0f18" stroke-width="2.500"/><path d="M2050 36l11-13 11 13z"/><path d="M2112 14l17 16-8 7V7l8 7-17 16" fill="none" stroke="#0a0f18" stroke-width="2"/><path fill="#f2f2f2" d="M2166 11h33v22h-33z"/><path d="M2166 12.500h33M2166 17h33M2166 22h33M2166 27h33M2166 31.500h33" stroke="#b03038" stroke-width="2.400"/><path fill="#3b4178" d="M2166 11h15v13h-15z"/><g fill="none" stroke="#0a0f18" stroke-width="3.500"><path d="M2229 17q20-19 40 0M2235 23q14-13 28 0M2241 29q8-7 16 0"/></g><circle cx="2249" cy="33" r="2.800"/></svg>
 <span data-w="50" style="font-size:24px">46%</span><svg width="95" height="44"><path d="M16 11h-3q-3 0-3 3v16q0 3 3 3h10M37 11h10q3 0 3 3v16q0 3-3 3h-3" fill="none" stroke="#0a0f18" stroke-width="2.500"/><path d="M53 18v8q3-2 3-4t-3-4zM32 9L21 24h8l-3 11 13-16h-8z"/></svg><span data-w="128">Tue Sep 8</span><span data-w="108" style="margin-left:17px">5:58 PM</span>
 <svg width="189" height="44" viewBox="2691 0 189 44"><circle cx="2749" cy="19" r="9.500" fill="none" stroke="#0a0f18" stroke-width="2.700"/><path d="M2756 26l10 10" stroke="#0a0f18" stroke-width="3"/><path d="M2798 14h4M2798 22h4M2798 30h4M2806 14h28M2806 22h22M2806 30h28" stroke="#0a0f18" stroke-width="3.500"/></svg>
</div>

<!-- dock -->
<div class="dock d-flex">
 <div class="d1"><svg viewBox="0 0 94 113" style="margin-left:6px"><use href="#bubble"/><circle cx="75" cy="26" r="17" fill="#dcdcdc"/><rect x="70" y="16" width="10" height="20" rx="1" fill="#bbb" stroke="#111" stroke-width="2"/></svg></div>
 <div class="d2 d-flex">
  <svg viewBox="0 0 94 113"><rect x="10" y="19" width="74" height="69" rx="3" fill="#e4edf6"/><path fill="url(#fnd)" d="M13 19H50Q42 40 41 60H50Q50 75 54 88H13q-3 0-3-3V22q0-3 3-3z"/><path d="M31 37v7M63 37v7M24 64q23 19 46 0" fill="none" stroke="#122" stroke-width="3"/><circle cx="47" cy="105" r="4.200"/></svg>
  <svg viewBox="0 0 94 113"><circle cx="47" cy="54" r="39" fill="#e9eaec"/><circle cx="47" cy="54" r="35.500" fill="url(#saf)"/><circle cx="47" cy="54" r="31" fill="none" stroke="#cde4f5" stroke-width="5" stroke-dasharray="1 2.200"/><path fill="#e0463c" d="M71 30L42 50l9 8z"/><path fill="#e8e8e8" d="M24 78L42 50l9 8z"/></svg>
  <svg viewBox="0 0 94 113"><use href="#chrome" x="47" y="54"/><circle cx="46" cy="105" r="4.200"/></svg>
  <svg viewBox="0 0 94 113"><g transform="rotate(-8 47 54)"><rect x="18" y="18" width="58" height="72" fill="none" stroke="#f4f4f4" stroke-width="4" stroke-dasharray="3 2"/><path fill="#f4f4f4" d="M19 19H75V89H19z"/><path fill="#4c96dc" d="M24 24H70V84H24z"/><path fill="#a9cbe8" d="M24 66H70V84H24z"/><path fill="#57402c" d="M33 31Q37 33 40 40 45 46 46 52 51 44 57 47 64 48 69 54 61 54 57 60 54 66 49 67L55 76 46 78 42 72 36 74 38 66 41 61Q34 48 33 31z"/><path fill="#8a6a44" d="M36 36q6 10 8 22l-4 3Q35 48 36 36zM50 52q8-3 14 1-8 1-13 8z"/><path fill="#eee" d="M43 61l6 3-5 5z"/></g><circle cx="65" cy="73" r="16" fill="none" stroke="#555a60" stroke-width="2.500" opacity=".5"/><circle cx="65" cy="73" r="11" fill="none" stroke="#555a60" stroke-width="1.500" opacity=".5"/></svg>
  <svg viewBox="0 0 94 113"><rect x="7" y="20" width="70" height="62" rx="7" fill="#5fd25c"/><rect x="18" y="37" width="34" height="30" rx="6" fill="#f3f3f3"/><path fill="#f3f3f3" d="M54 48L66 37V60H54z"/><ellipse cx="66" cy="68" rx="19" ry="19.500" fill="#f4f7f4"/><path d="M58 60q1 13 16 18" fill="none" stroke="#4cc24c" stroke-width="6"/><circle cx="74" cy="26" r="17" fill="#e34f42"/><text x="74" y="34" font-size="21" text-anchor="middle" fill="#fff">1</text></svg>
  <svg viewBox="0 0 94 113"><path fill="#4b4f52" d="M9 31l65-12 11 61-60 14z"/><path fill="#ddd" d="M13 30l61-9 8 56-61 13z"/><path fill="#f7f7f7" d="M9 30l60-14 9 58-58 13z"/><path fill="#d9534c" d="M9 28l60-13 2 20-60 14z"/><text x="26" y="37" font-size="15" fill="#fff" transform="rotate(-8 40 36)">SEP</text><text x="46" y="74" font-size="38" text-anchor="middle" fill="#222" font-weight="300" font-family="Roboto">8</text></svg>
  <svg viewBox="0 0 94 113"><path fill="#2d2e30" d="M10 26q0-5 5-6l48-7 14 72q0 4-5 5l-49 5q-5 0-6-4z"/><path fill="#f7f7f7" d="M12 25q0-4 4-5l44-6q5-1 6 3l12 66q0 4-5 5l-48 4q-5 0-5-4z"/><g><circle cx="21" cy="35" r="5" fill="#4d83ea"/><circle cx="23" cy="48" r="5" fill="#dd5246"/><circle cx="25" cy="62" r="5" fill="#eda23e"/><circle cx="27" cy="76" r="5" fill="#555b62"/></g><path d="M31 33l31-5M33 47l31-5M35 60l31-5M37 74l31-5" stroke="#b7b7b7" stroke-width="1.500"/></svg>
  <svg viewBox="0 0 94 113"><use href="#bubble"/><circle cx="46" cy="105" r="4.200" fill="#3a0e06"/></svg>
  <svg viewBox="0 0 94 113"><circle cx="47" cy="54" r="39" fill="#65d36e"/><path d="M22 43q25-8 50 5M25 55q22-6 43 5M28 67q18-5 35 4" fill="none" stroke="#151515" stroke-width="7" stroke-linecap="round"/><circle cx="46" cy="105" r="4.200" fill="#3a0e06"/></svg>
  <svg viewBox="0 0 94 113"><path fill="url(#star)" stroke="#e2e5ee" stroke-width="4" stroke-linejoin="round" d="M44 15l10 23 34-4-23 26 14 30-28-13-22 17 3-32L7 46l27-6z"/><path fill="#e4e4ee" d="M38 49l17-3 2 15-17 3zM58 54l8-7 1 15z"/></svg>
  <svg viewBox="0 0 94 113"><circle cx="47" cy="54" r="39" fill="#e6e8f0"/><circle cx="47" cy="54" r="36" fill="#5970bd"/><path fill="#f4f4f6" d="M29 44q5-5 11-6l2 3q5-1 10 0l2-3q6 1 11 6 6 12 5 23-6 6-12 6l-3-5q-8 2-16 0l-3 5q-7 0-12-6 0-12 5-23z"/><ellipse cx="40" cy="57" rx="4.500" ry="5" fill="#5970bd"/><ellipse cx="54" cy="57" rx="4.500" ry="5" fill="#5970bd"/></svg>
  <svg viewBox="0 0 94 113"><rect x="5" y="10" width="84" height="83" rx="15" fill="url(#ccg)"/><rect x="5" y="10" width="84" height="83" rx="15" fill="url(#ccb)"/><path d="M34 76H57A24 24 0 0 0 57 28Q46 28 39 38 18 40 17 57 18 76 34 76z" fill="none" stroke="#fff" stroke-width="3.500"/><path d="M45 66H35a10 10 0 0 1 0-20q6 0 10 5l13 16" fill="none" stroke="#fff" stroke-width="5.500"/><path fill="#fff" d="M44 42q6-8 13-8a17 17 0 0 1 7 33q-3 1-5-1z"/></svg>
  <svg viewBox="0 0 94 113"><rect x="5" y="10" width="84" height="83" rx="15" fill="#071e33"/><text x="47" y="68" text-anchor="middle" font-size="50" textLength="52" lengthAdjust="spacingAndGlyphs" font-family="Open Sans" font-weight="700" fill="#55a8f8">Ps</text><circle cx="46" cy="105" r="4.200"/></svg>
  <svg viewBox="0 0 94 113"><rect x="5" y="10" width="84" height="83" rx="15" fill="#2c0500"/><text x="47" y="68" text-anchor="middle" font-size="50" textLength="50" lengthAdjust="spacingAndGlyphs" font-family="Open Sans" font-weight="700" fill="#f09a37">Ai</text><circle cx="46" cy="105" r="4.200"/></svg>
  <svg viewBox="0 0 94 113"><rect x="5" y="10" width="84" height="83" rx="15" fill="#04034f"/><text x="48" y="68" text-anchor="middle" font-size="50" textLength="50" lengthAdjust="spacingAndGlyphs" font-family="Open Sans" font-weight="700" fill="#9a99f8">Pr</text></svg>
  <svg viewBox="0 0 94 113"><rect x="7" y="14" width="80" height="81" rx="9" fill="#22598c"/><rect x="7" y="14" width="80" height="74" rx="9" fill="#3f9bd8"/><rect x="15" y="22" width="64" height="57" rx="6" fill="#fff"/><path d="M44.500 34H26.500V67H44.500M49.500 34H67.500V67H49.500" fill="none" stroke="#4a4a4a" stroke-width="11"/><circle cx="46" cy="105" r="4.200"/></svg>
  <svg viewBox="0 0 94 113"><path fill="#f8f6f0" stroke="#c7b36a" d="M12 22l60-9 10 72-58 9z"/><path fill="#f4cb45" d="M12 22l60-9 1 12-60 10z"/><path d="M14 42l61-10M15 50l61-10M16 57l61-9M17 64l61-9M19 72l60-9M20 79l60-9M21 86l60-9" stroke="#c9c9c9" stroke-width="1.300"/></svg>
  <svg viewBox="0 0 94 113"><circle cx="47" cy="54" r="39" fill="#cfd2dc"/><circle cx="47" cy="53" r="36" fill="#eef0f4"/><path d="M39 74V37l25-7V66" fill="none" stroke="url(#note)" stroke-width="5"/><path d="M37 38l29-9v9l-29 9z" fill="#e0586e"/><ellipse cx="34" cy="73" rx="8" ry="6.500" fill="#8c5cf0"/><ellipse cx="59" cy="67" rx="8" ry="6.500" fill="#4fa6f4"/></svg>
  <svg viewBox="0 0 94 113"><g transform="translate(6 -2)"><use href="#pages"/></g><circle cx="44" cy="105" r="4.200"/></svg>
  <svg viewBox="0 0 94 113"><g transform="translate(7 0)"><rect x="0" y="18" width="78" height="74" rx="4" fill="url(#gry)"/><circle cx="39" cy="55" r="32" fill="#2c2c2c"/><circle cx="39" cy="55" r="25.500" fill="none" stroke="#b0b0b0" stroke-width="6" stroke-dasharray="3 2.340"/><circle cx="39" cy="55" r="21.500" fill="none" stroke="#a8a8a8" stroke-width="5"/><path d="M39 55H61M39 55L28 36M39 55L28 74" stroke="#a8a8a8" stroke-width="6"/><circle cx="39" cy="55" r="4" fill="#ccc"/></g></svg>
  <div class="sep s1"><i></i></div>
  <svg viewBox="0 0 94 113"><use href="#chrome" x="53" y="54"/><circle cx="52" cy="105" r="4.200"/></svg>
  <svg viewBox="0 0 94 113"><path fill="#fff" d="M21 20h67v40H21z"/><path fill="#8f7340" d="M24 23h61v40H24z"/><path fill="#fff" d="M11 35l67-10 8 50-67 13z"/><path fill="#a9cbf2" d="M15 38l61-9 2 22-60 8z"/><path fill="#27529a" d="M18 58l60-8 2 10-60 12z"/><path fill="#e4edf2" d="M20 70l50-8 8 12-57 11z"/><path fill="#5d4a38" d="M20 80l20-5 12 5-31 5z"/><path fill="#857765" d="M62 60h32v22q-3 10-16 10t-16-10z"/><circle cx="78" cy="61" r="16.500" fill="#3b3e42" stroke="#ccc" stroke-width="2"/><circle cx="78" cy="61" r="12" fill="#9aa6b0"/><path fill="#6b5540" d="M67 64q10-6 22 0-2 9-11 9t-11-9z"/><circle cx="52" cy="105" r="4.200"/></svg>
  <svg viewBox="0 0 94 113"><rect x="14" y="14" width="80" height="80" rx="24" fill="url(#zm)"/><path fill="#fff" d="M29 40H56q9 0 9 9v19H37q-8 0-8-8zM67 49l11-8q2 0 2 2v23q0 2-2 2l-11-8z"/></svg>
  <div class="sep s2"><i></i></div>
  <svg viewBox="0 0 94 113"><path fill="#fff" d="M18 11h36q8 2 12 12H18z"/><path fill="url(#grid)" d="M18 11h36q8 2 12 12H18z"/><path fill="#fff" stroke="#ddd" d="M23 16h50v60H23z"/><path fill="#f6f8fa" d="M10 21H58q8 0 13 18 13 4 13 12V94H10z"/><path fill="url(#grid)" d="M10 21H58q8 0 13 18 13 4 13 12V94H10z"/><path fill="#f1f1f1" d="M16 40h63v34H16z"/><path fill="#ebebeb" stroke="#ccc" d="M19 56v-8q0-7 5-7h7q5 0 5 7v8zM37 56v-8q0-7 5-7h7q5 0 5 7v8zM19 57h35v15H19zM56 49h16v7H56zM58 57h14v15H58z"/><path fill="#c4c4c4" d="M32 57h6v15h-6zM47 57h6v15h-6z"/><path d="M61 52h6" stroke="#222" stroke-width="2"/><path fill="#e4e6e8" d="M61 22q2 14 10 15 6 0 2 0z"/></svg>
  <svg viewBox="0 0 94 113"><path fill="#fff" d="M5 11h84v84H5z"/><path fill="#d8d8d8" d="M5 11h84v6H5z"/><path fill="#d9a44c" d="M19 28h9v5h-9z"/><path fill="#8a6a2a" d="M19 36h9v6h-9z"/><path fill="#555" d="M19 86h9v9h-9z"/><path d="M33 34h34M33 37h10M17 21h12M33 90h30M33 93h20M17 67h5" stroke="#222" stroke-width="2"/><path d="M33 43h8M33 46h14M33 49h12M33 52h16M33 55h17M33 58h16" stroke="#777" stroke-width="1.300"/><path d="M33 29h9M20 73h10M33 87h9" stroke="#d05060" stroke-width="1.500"/><path d="M33 63h14" stroke="#5b9ad0"/><g transform="translate(74 80) scale(.38)"><use href="#chrome"/></g></svg>
  <svg viewBox="0 0 94 113"><path fill="#f2f2f2" d="M3 24h84v58H3z"/><path fill="#fff" d="M14 30h54v46H14z"/><path fill="#ddd" d="M5 32h8v10H5zM5 44h8v9H5zM5 55h8v9H5zM5 66h8v9H5z"/><path d="M21 31h40M21 34h38M21 37h40M21 40h39M21 43h41M21 46h38M21 49h41M21 54h40M21 57h38M21 60h40M21 63h39M21 66h41M70 34h10M70 38h14M70 44h12M70 49h14" stroke="#9a9a9a" stroke-width="1.200"/><g transform="translate(55 58) scale(.4)"><use href="#pages"/></g></svg>
  <svg viewBox="0 0 94 113"><path fill="#e3e3e3" d="M17 22l8-7 8 1 8-5 9 4 8-4 12 7 5 10H15z"/><path fill="#333" d="M22 24l10-5 10 8 14-8 12 6v6H22z"/><path fill="#e8e8e8" d="M30 24l8-6 3 10zM56 18l7 2-3 8z"/><path fill="#46b4a6" d="M38 19l7-3 3 5z"/><path fill="#c64a38" d="M47 20l3 8h-5z"/><path fill="#3e5fa0" d="M63 22l6 3-5 3z"/><path fill="url(#cn)" d="M13 27q32 10 64 0l-9 58q-1 8-22 8t-24-8z"/><path d="M13 26q0 6 32 6t32-6" fill="none" stroke="#f4f4f4" stroke-width="2.500"/></svg>
 </div>
</div>
</div>
<script>
// Track each label to its design width.
function track(){document.querySelectorAll('[data-w]').forEach(function(e){
  e.style.letterSpacing='0';
  var r=document.createRange();r.selectNodeContents(e);
  var n=e.textContent.length,d=(+e.dataset.w-r.getBoundingClientRect().width)/n;
  e.style.letterSpacing=d.toFixed(3)+'px';
});}
track();
document.fonts.ready.then(track);
</script>
</body>
</html>
